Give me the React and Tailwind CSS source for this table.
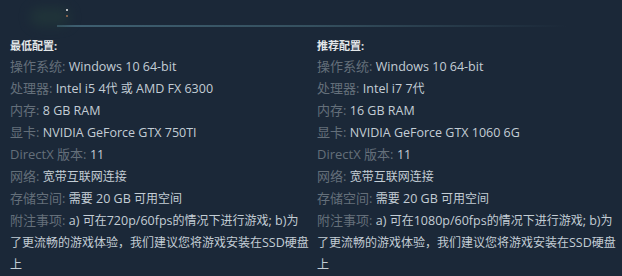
const minReqs = [
  ['操作系统:', 'Windows 10 64-bit'],
  ['处理器:', 'Intel i5 4代 或 AMD FX 6300'],
  ['内存:', '8 GB RAM'],
  ['显卡:', 'NVIDIA GeForce GTX 750TI'],
  ['DirectX 版本:', '11'],
  ['网络:', '宽带互联网连接'],
  ['存储空间:', '需要 20 GB 可用空间'],
  ['附注事项:', 'a) 可在720p/60fps的情况下进行游戏; b)为了更流畅的游戏体验，我们建议您将游戏安装在SSD硬盘上'],
];

const recReqs = [
  ['操作系统:', 'Windows 10 64-bit'],
  ['处理器:', 'Intel i7 7代'],
  ['内存:', '16 GB RAM'],
  ['显卡:', 'NVIDIA GeForce GTX 1060 6G'],
  ['DirectX 版本:', '11'],
  ['网络:', '宽带互联网连接'],
  ['存储空间:', '需要 20 GB 可用空间'],
  ['附注事项:', 'a) 可在1080p/60fps的情况下进行游戏; b)为了更流畅的游戏体验，我们建议您将游戏安装在SSD硬盘上'],
];

// CJK runs render a bit smaller than latin ones, like the store font does
const cjk = /([\u3000-\u303f\u3400-\u9fff\uff00-\uffef]+)/;

const Value = ({ text }) =>
  text.split(cjk).map((part, i) =>
    cjk.test(part) ? (
      <span key={i} className="text-[12px] leading-[14px]">{part}</span>
    ) : (
      <span key={i} className="text-[12.5px] leading-[14px]">{part}</span>
    )
  );

const ReqColumn = ({ title, rows }) => (
  <div>
    <div className="text-[11px] leading-[16px] font-bold text-[#e2e6e9] mb-[1px]">{title}</div>
    <ul>
      {rows.map(([label, value]) => (
        <li key={label} className="text-[13px] leading-[22px] text-[#c3cdd5]">
          <span className="text-[#646f7a] leading-[14px]">{label} </span>
          <Value text={value} />
        </li>
      ))}
    </ul>
  </div>
);

export default function App() {
  return (
    <div
      className="w-[622px] h-[276px] bg-[#1b2838] overflow-hidden"
      style={{ fontFamily: '"Open Sans", "Noto Sans CJK SC", sans-serif' }}
    >
      <div className="h-[25px] relative">
        <div className="absolute left-[30px] top-[8px] w-[40px] h-[18px] rounded-full bg-[#22393a] blur-[6px] opacity-70" />
        <div className="absolute left-[66px] top-[9px] w-[2px] h-[2px] rounded-full bg-[#e8e8e8]" />
        <div className="absolute left-[66px] top-[15px] w-[2px] h-[2px] rounded-full bg-[#a07050]" />
      </div>
      <div className="h-[2px] ml-[57px] w-[510px] bg-gradient-to-r from-[#3f6072] via-[#35505f] to-transparent" />
      <div className="grid grid-cols-[307px_300px] pl-[10px] pt-[11px]">
        <div className="w-[299px]">
          <ReqColumn title="最低配置:" rows={minReqs} />
        </div>
        <ReqColumn title="推荐配置:" rows={recReqs} />
      </div>
    </div>
  );
}
